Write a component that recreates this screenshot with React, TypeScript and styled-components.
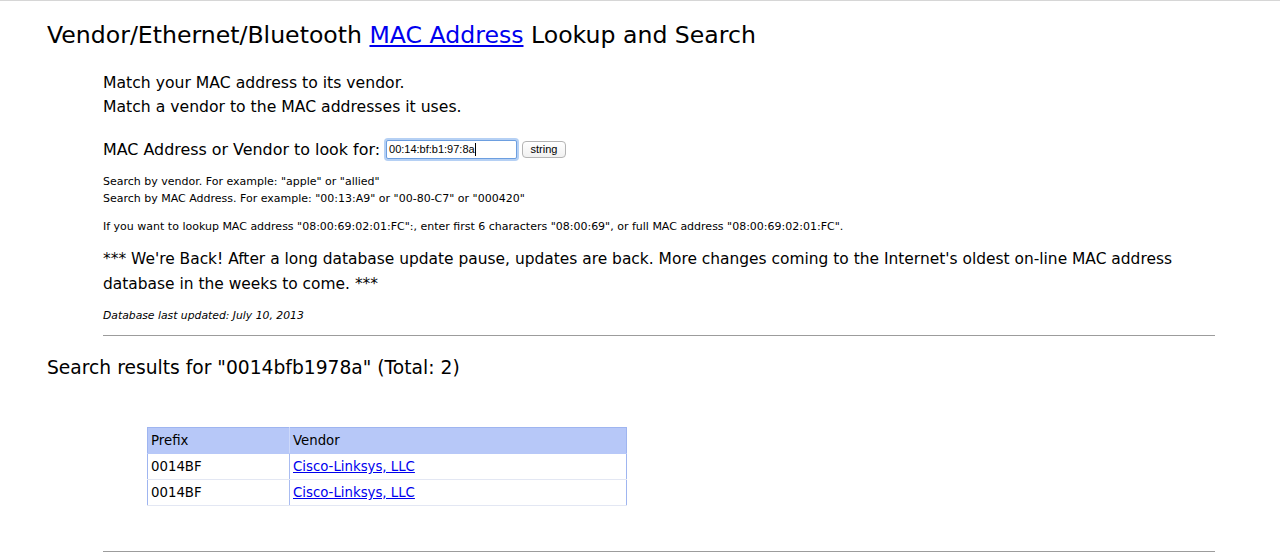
import React from 'react';
import styled, { createGlobalStyle } from 'styled-components';

const GlobalStyle = createGlobalStyle`
  html, body {
    margin: 0;
    padding: 0;
    background: #fff;
  }
  body {
    font-family: 'DejaVu Sans', 'Noto Sans', sans-serif;
    color: #000;
  }
`;

const results = [
  { prefix: '0014BF', vendor: 'Cisco-Linksys, LLC' },
  { prefix: '0014BF', vendor: 'Cisco-Linksys, LLC' },
];

export default function App() {
  return (
    <>
      <GlobalStyle />
      <Page>
        <Title>
          Vendor/Ethernet/Bluetooth <Link href="#">MAC Address</Link> Lookup and Search
        </Title>
        <Intro>
          <Lines>
            Match your MAC address to its vendor.
            <br />
            Match a vendor to the MAC addresses it uses.
          </Lines>
          <SearchForm>
            <span>MAC Address or Vendor to look for:</span>
            <Field>
              00:14:bf:b1:97:8a
              <Caret />
            </Field>
            <SubmitButton type="button">string</SubmitButton>
          </SearchForm>
          <Hint $gap={11.5}>
            Search by vendor. For example: "apple" or "allied"
            <br />
            Search by MAC Address. For example: "00:13:A9" or "00-80-C7" or "000420"
          </Hint>
          <Hint $gap={11}>
            If you want to lookup MAC address "08:00:69:02:01:FC":, enter first 6 characters "08:00:69", or full MAC
            address "08:00:69:02:01:FC".
          </Hint>
          <Notice>
            *** We're Back! After a long database update pause, updates are back. More changes coming to the Internet's
            oldest on-line MAC address database in the weeks to come. ***
          </Notice>
          <Updated>Database last updated: July 10, 2013</Updated>
          <Rule $gap={11.5} />
        </Intro>
        <ResultsTitle>Search results for "0014bfb1978a" (Total: 2)</ResultsTitle>
        <ResultsTable>
          <thead>
            <tr>
              <HeadCell $first>Prefix</HeadCell>
              <HeadCell>Vendor</HeadCell>
            </tr>
          </thead>
          <tbody>
            {results.map((r, i) => (
              <tr key={i}>
                <BodyCell $first>{r.prefix}</BodyCell>
                <BodyCell>
                  <Link href="#">{r.vendor}</Link>
                </BodyCell>
              </tr>
            ))}
          </tbody>
        </ResultsTable>
        <Intro>
          <Rule $gap={45} />
        </Intro>
      </Page>
    </>
  );
}

const Page = styled.div`
  border-top: 1px solid #d6d6d6;
  padding: 0 65px 0 47px;
  display: flex;
  flex-direction: column;
`;

const Title = styled.h1`
  margin: 20px 0 0;
  font-size: 23.6px;
  line-height: 28px;
  font-weight: normal;
  white-space: nowrap;
`;

const Link = styled.a`
  color: #0000ee;
  text-decoration: underline;
`;

const Intro = styled.div`
  margin-left: 56px;
  display: flex;
  flex-direction: column;
`;

const Lines = styled.p`
  margin: 22px 0 0;
  font-size: 15.65px;
  line-height: 24px;
`;

const SearchForm = styled.div`
  margin-top: 18px;
  height: 24px;
  display: flex;
  align-items: center;
  font-size: 15.9px;
`;

const Field = styled.div`
  box-sizing: border-box;
  width: 131px;
  height: 19px;
  margin-left: 6px;
  padding: 0 2px;
  display: flex;
  align-items: center;
  border: 1px solid #6d9fe0;
  border-radius: 2px;
  box-shadow: 0 0 0 2px rgba(120, 170, 235, 0.55);
  font-family: 'Liberation Sans', Arial, sans-serif;
  font-size: 11px;
  background: #fff;
`;

const Caret = styled.span`
  display: inline-block;
  width: 1px;
  height: 13px;
  background: #000;
`;

const SubmitButton = styled.button`
  box-sizing: border-box;
  width: 44px;
  height: 17px;
  margin-left: 5px;
  padding: 0;
  border: 1px solid #b4b4b4;
  border-radius: 4px;
  background: linear-gradient(#ffffff, #f1f1f1);
  font-family: 'Liberation Sans', Arial, sans-serif;
  font-size: 11px;
  color: #000;
`;

const Hint = styled.p<{ $gap: number }>`
  margin: ${(p) => p.$gap}px 0 0;
  font-size: 11px;
  line-height: 17px;
`;

const Notice = styled.p`
  margin: 12px 0 0;
  font-size: 15.45px;
  line-height: 25px;
`;

const Updated = styled.p`
  margin: 10px 0 0;
  font-size: 10.8px;
  line-height: 17px;
  font-style: italic;
`;

const Rule = styled.hr<{ $gap: number }>`
  margin: ${(p) => p.$gap}px 0 0;
  border: 0;
  border-top: 1px solid #9c9c9c;
  height: 0;
`;

const ResultsTitle = styled.h2`
  margin: 20px 0 0;
  font-size: 18.7px;
  line-height: 24px;
  font-weight: normal;
`;

const ResultsTable = styled.table`
  margin: 47px 0 0 100px;
  width: 480px;
  border-collapse: collapse;
  border: 1px solid #9fb5f0;
  border-bottom: 0;
  font-size: 13.3px;
`;

const HeadCell = styled.th<{ $first?: boolean }>`
  height: 26px;
  padding: 0 3px;
  box-sizing: border-box;
  background: #b7c8f8;
  text-align: left;
  font-weight: normal;
  width: ${(p) => (p.$first ? '142px' : 'auto')};
  border-right: ${(p) => (p.$first ? '1px solid #cdd9fa' : '0')};
  border-bottom: 1px solid #b7c8f8;
`;

const BodyCell = styled.td<{ $first?: boolean }>`
  height: 26px;
  padding: 0 3px;
  box-sizing: border-box;
  border-bottom: 1px solid #e3e7f3;
  border-right: ${(p) => (p.$first ? '1px solid #a9bcf1' : '0')};
`;
